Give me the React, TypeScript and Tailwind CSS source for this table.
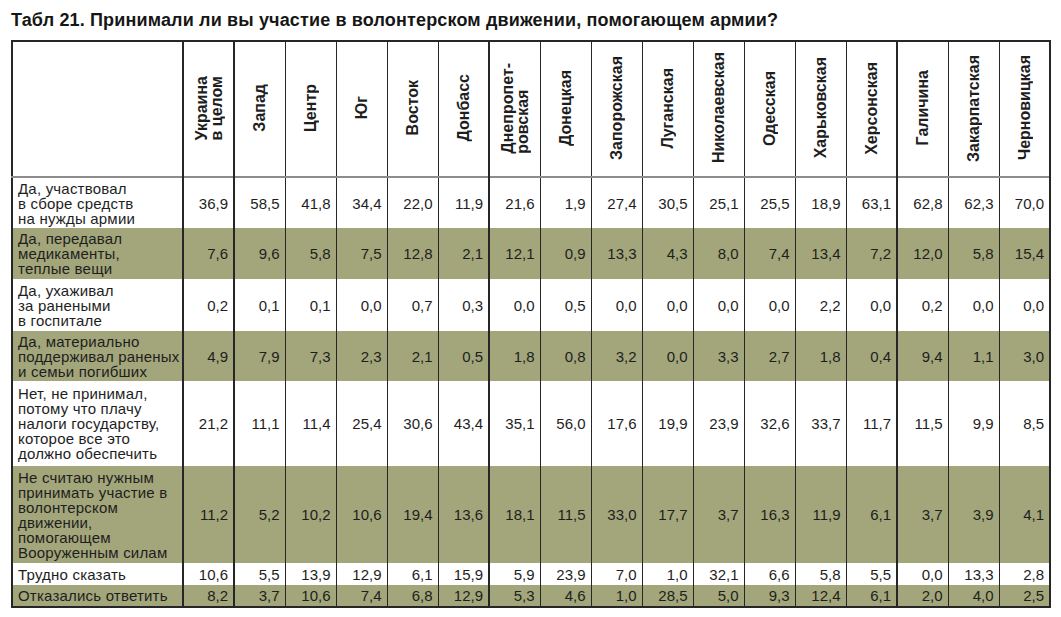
const HEADERS = [
  "Украина\nв целом",
  "Запад",
  "Центр",
  "Юг",
  "Восток",
  "Донбасс",
  "Днепропет-\nровская",
  "Донецкая",
  "Запорожская",
  "Луганская",
  "Николаевская",
  "Одесская",
  "Харьковская",
  "Херсонская",
  "Галичина",
  "Закарпатская",
  "Черновицкая",
];

// columns followed by a heavy rule
const THICK = new Set([0, 5, 13, 16]);

type Row = { label: string; values: string; green: boolean; h: string };

const ROWS: Row[] = [
  {
    label: "Да, участвовал\nв сборе средств\nна нужды армии",
    values: "36,9 58,5 41,8 34,4 22,0 11,9 21,6 1,9 27,4 30,5 25,1 25,5 18,9 63,1 62,8 62,3 70,0",
    green: false,
    h: "h-[51px]",
  },
  {
    label: "Да, передавал\nмедикаменты,\nтеплые вещи",
    values: "7,6 9,6 5,8 7,5 12,8 2,1 12,1 0,9 13,3 4,3 8,0 7,4 13,4 7,2 12,0 5,8 15,4",
    green: true,
    h: "h-[51px]",
  },
  {
    label: "Да, ухаживал\nза ранеными\nв госпитале",
    values: "0,2 0,1 0,1 0,0 0,7 0,3 0,0 0,5 0,0 0,0 0,0 0,0 2,2 0,0 0,2 0,0 0,0",
    green: false,
    h: "h-[52px]",
  },
  {
    label: "Да, материально\nподдерживал раненых\nи семьи погибших",
    values: "4,9 7,9 7,3 2,3 2,1 0,5 1,8 0,8 3,2 0,0 3,3 2,7 1,8 0,4 9,4 1,1 3,0",
    green: true,
    h: "h-[50px]",
  },
  {
    label: "Нет, не принимал,\nпотому что плачу\nналоги государству,\nкоторое все это\nдолжно обеспечить",
    values: "21,2 11,1 11,4 25,4 30,6 43,4 35,1 56,0 17,6 19,9 23,9 32,6 33,7 11,7 11,5 9,9 8,5",
    green: false,
    h: "h-[85px]",
  },
  {
    label: "Не считаю нужным\nпринимать участие в\nволонтерском\nдвижении,\nпомогающем\nВооруженным силам",
    values: "11,2 5,2 10,2 10,6 19,4 13,6 18,1 11,5 33,0 17,7 3,7 16,3 11,9 6,1 3,7 3,9 4,1",
    green: true,
    h: "h-[97px]",
  },
  {
    label: "Трудно сказать",
    values: "10,6 5,5 13,9 12,9 6,1 15,9 5,9 23,9 7,0 1,0 32,1 6,6 5,8 5,5 0,0 13,3 2,8",
    green: false,
    h: "h-[22px]",
  },
  {
    label: "Отказались ответить",
    values: "8,2 3,7 10,6 7,4 6,8 12,9 5,3 4,6 1,0 28,5 5,0 9,3 12,4 6,1 2,0 4,0 2,5",
    green: true,
    h: "h-[22px]",
  },
];

function rule(i: number) {
  return THICK.has(i) ? "border-r-2 border-r-[#262626]" : "border-r border-r-[#262626]";
}

export default function App() {
  return (
    <main className="min-h-screen bg-white pt-[10px] font-['Liberation_Sans',Arial,sans-serif] text-[#1e1e1e]">
      <h1 className="ml-[11px] text-[18px] font-bold leading-[20px] tracking-[0.15px] text-[#161616]">
        Табл 21. Принимали ли вы участие в волонтерском движении, помогающем армии?
      </h1>

      <table className="mt-[10px] ml-[11px] w-[1038px] table-fixed border-collapse border-2 border-[#262626] text-[15px] leading-[15px]">
        <colgroup>
          <col className="w-[171px]" />
          {HEADERS.map((h) => (
            <col key={h} className="w-[51px]" />
          ))}
        </colgroup>
        <thead>
          <tr className="h-[136px] border-b-2 border-b-[#8c8c8c]">
            <th className="border-r-2 border-r-[#262626]" />
            {HEADERS.map((h, i) => (
              <th key={h} className={`${rule(i)} p-0 text-center align-middle`}>
                <div className="inline-block rotate-180 whitespace-pre text-start text-[16px] font-bold leading-[15px] [writing-mode:vertical-rl]">
                  {h}
                </div>
              </th>
            ))}
          </tr>
        </thead>
        <tbody>
          {ROWS.map((r) => (
            <tr key={r.label} className={`${r.h} ${r.green ? "bg-[#a2a67a]" : "bg-white"}`}>
              <td className="whitespace-pre border-r-2 border-r-[#262626] py-0 pl-[5px] pr-0 align-middle tracking-[0.2px]">
                {r.label}
              </td>
              {r.values.split(" ").map((v, i) => (
                <td
                  key={i}
                  className={`${rule(i)} py-0 pr-[5px] pl-0 text-right align-middle`}
                >
                  {v}
                </td>
              ))}
            </tr>
          ))}
        </tbody>
      </table>
    </main>
  );
}
